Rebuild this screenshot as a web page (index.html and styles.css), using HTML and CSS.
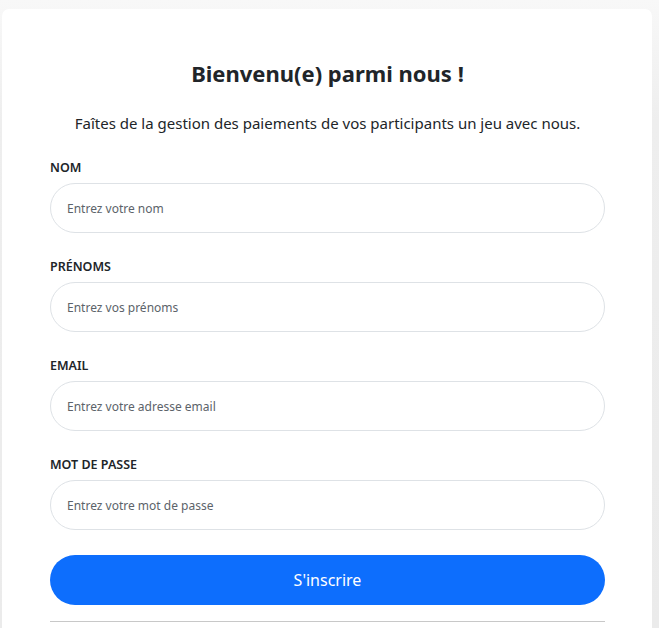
FILE: index.html
```html
<!DOCTYPE html>
<html lang="fr">
<head>
<meta charset="utf-8">
<title>Inscription</title>
<link rel="stylesheet" href="styles.css">
</head>
<body>
<div class="card">
  <h1 class="title">Bienvenu(e) parmi nous !</h1>
  <p class="subtitle">Faîtes de la gestion des paiements de vos participants un jeu avec nous.</p>
  <form class="form">
    <div class="field">
      <label class="label">NOM</label>
      <input class="input" type="text" placeholder="Entrez votre nom">
    </div>
    <div class="field">
      <label class="label">PRÉNOMS</label>
      <input class="input" type="text" placeholder="Entrez vos prénoms">
    </div>
    <div class="field">
      <label class="label">EMAIL</label>
      <input class="input" type="email" placeholder="Entrez votre adresse email">
    </div>
    <div class="field">
      <label class="label">MOT DE PASSE</label>
      <input class="input" type="password" placeholder="Entrez votre mot de passe">
    </div>
    <button class="btn" type="button">S'inscrire</button>
    <hr class="sep">
  </form>
</div>
</body>
</html>
```
FILE: styles.css
```css
html, body {
  margin: 0;
  height: 100%;
}
body {
  background: linear-gradient(180deg, #f8f8f8 0px, #eeeeee 120px, #ebebeb 100%);
  padding: 9px 7px 0 2px;
  box-sizing: border-box;
  font-family: "Noto Sans", "Open Sans", sans-serif;
  color: #212529;
  overflow: hidden;
}
.card {
  background: #fff;
  border-radius: 7px;
  padding: 44px 47px 40px 48px;
  min-height: 700px;
}
.title {
  margin: 0;
  text-align: center;
  font-size: 22px;
  font-weight: 700;
  line-height: 40px;
}
.subtitle {
  margin: 18px 0 0;
  text-align: center;
  font-size: 15px;
  line-height: 24px;
}
.form {
  margin-top: 24px;
  display: flex;
  flex-direction: column;
}
.field {
  display: flex;
  flex-direction: column;
  margin-bottom: 25px;
}
.label {
  font-size: 12.5px;
  font-weight: 600;
  line-height: 18px;
  margin-bottom: 6px;
}
.input {
  height: 50px;
  box-sizing: border-box;
  border: 1px solid #dee2e6;
  border-radius: 25px;
  padding: 0 16px;
  font-family: inherit;
  font-size: 12px;
  color: #212529;
  background: #fff;
  outline: none;
}
.input::placeholder {
  color: #5c636a;
}
.btn {
  margin-top: 0;
  height: 50px;
  border: none;
  border-radius: 25px;
  background: #0d6efd;
  color: #fff;
  font-family: inherit;
  font-size: 16px;
}
.sep {
  margin: 16px 0 0;
  border: none;
  border-top: 1px solid #c8c8c8;
}
```
